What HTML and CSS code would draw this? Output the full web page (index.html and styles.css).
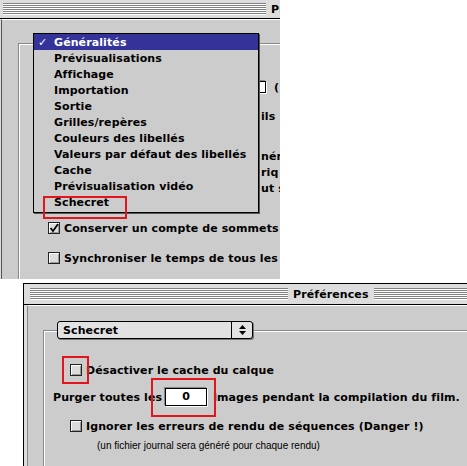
FILE: index.html
```html
<!DOCTYPE html>
<html lang="fr">
<head>
  <meta charset="UTF-8">
  <meta name="viewport" content="width=device-width, initial-scale=1.0">
  <title>Préférences</title>
  <link rel="stylesheet" href="styles.css">
</head>
<body>
  <!-- fenêtre du haut : menu déroulant ouvert -->
  <div class="win win-top">
    <div class="titlebar">
      <div class="stripes stripes-top"></div>
      <span class="title">Préférences</span>
      <div class="stripes"></div>
    </div>
    <div class="content">
      <div class="group">
        <div class="row row-field"><span class="field"></span><span>(1 à 99)</span></div>
        <div class="row row-frag gap-a">ils</div>
        <div class="row row-frag gap-b">nér</div>
        <div class="row row-frag">riq</div>
        <div class="row row-frag">ut s</div>
        <div class="row row-check gap-b">
          <span class="box"><svg width="10" height="10" viewBox="0 0 10 10"><path d="M1.5 5 L4 8 L9 1" fill="none" stroke="#000" stroke-width="1.7"/></svg></span>
          Conserver un compte de sommets
        </div>
        <div class="row row-check gap-c"><span class="box"></span>Synchroniser le temps de tous les éléments</div>
      </div>
    </div>

    <ul class="menu">
      <li class="sel"><span class="chk">✓</span>Généralités</li>
      <li><span class="chk"></span>Prévisualisations</li>
      <li><span class="chk"></span>Affichage</li>
      <li><span class="chk"></span>Importation</li>
      <li><span class="chk"></span>Sortie</li>
      <li><span class="chk"></span>Grilles/repères</li>
      <li><span class="chk"></span>Couleurs des libellés</li>
      <li><span class="chk"></span>Valeurs par défaut des libellés</li>
      <li><span class="chk"></span>Cache</li>
      <li><span class="chk"></span>Prévisualisation vidéo</li>
      <li><span class="chk"></span>Schecret</li>
    </ul>
    <div class="mark mark-menu"></div>
  </div>

  <!-- fenêtre du bas : panneau Schecret -->
  <div class="win win-bottom">
    <div class="titlebar">
      <div class="stripes stripes-bottom"></div>
      <span class="title">Préférences</span>
      <div class="stripes"></div>
    </div>
    <div class="content">
      <div class="group">
        <div class="popup">
          <span class="popup-label">Schecret</span>
          <span class="popup-arrows">
            <svg width="7" height="10" viewBox="0 0 7 10"><path d="M0 4 L3.5 0 L7 4Z M0 6 L3.5 10 L7 6Z" fill="#000"/></svg>
          </span>
        </div>
        <div class="row row-opt first"><span class="box"></span>Désactiver le cache du calque</div>
        <div class="row row-purge">Purger toutes les <span class="field field-num">0</span> images pendant la compilation du film.</div>
        <div class="row row-opt second"><span class="box"></span>Ignorer les erreurs de rendu de séquences (Danger !)</div>
        <div class="row note">(un fichier journal sera généré pour chaque rendu)</div>
      </div>
    </div>
    <div class="mark mark-box"></div>
    <div class="mark mark-field"></div>
  </div>
</body>
</html>
```

FILE: styles.css
```css
body {
  margin: 0;
  background: #fff;
  font-family: "DejaVu Sans", sans-serif;
  font-weight: bold;
  font-size: 11px;
  letter-spacing: 0.1px;
  color: #000;
}
.win {
  position: relative;
  overflow: hidden;
  background: #ddd;
}
.win-top {
  width: 280px;
  height: 279px;
}
.win-bottom {
  width: 443px;
  height: 182px;
  margin: 4px 0 0 23px;
  border-top: 1px solid #000;
  border-left: 1px solid #000;
}

/* barre de titre rayée */
.titlebar {
  display: flex;
  align-items: center;
  height: 18px;
  padding-left: 3px;
  border-bottom: 1px solid #000;
  background: #ddd;
}
.win-bottom .titlebar {
  height: 20px;
  padding-left: 6px;
}
.stripes {
  flex: 1;
  height: 12px;
  background: repeating-linear-gradient(#808080 0 1px, #fff 1px 2px);
}
.stripes-top {
  flex: none;
  width: 263px;
}
.stripes-bottom {
  flex: none;
  width: 258px;
}
.title {
  flex: none;
  padding: 0 5px;
  white-space: nowrap;
}

.content {
  height: 100%;
  margin-left: 1px;
  border-top: 1px solid #fff;
  border-left: 1px solid #555;
  background: #ccc;
}
.win-bottom .content {
  margin-left: 3px;
  border-left-color: #888;
}
.group {
  height: 400px;
  border-top: 1px solid #888;
  border-left: 1px solid #888;
  box-shadow: inset 1px 1px 0 #fff;
}
.win-top .group {
  margin: 23px 0 0 16px;
}
.win-bottom .group {
  margin: 24px 0 0 15px;
}

.row {
  display: flex;
  align-items: center;
  height: 16px;
  white-space: nowrap;
}
.row > span {
  flex: none;
}
.row-field {
  margin-top: 35px;
  padding-left: 187px;
}
.row-frag {
  padding-left: 242px;
}
.row-check {
  padding-left: 29px;
}
.gap-a { margin-top: 13px; }
.gap-b { margin-top: 24px; }
.gap-c { margin-top: 14px; }

.field {
  display: inline-block;
  box-sizing: border-box;
  width: 60px;
  height: 12px;
  margin-right: 8px;
  background: #fff;
  border: 1px solid #000;
  box-shadow: -1px -1px 0 #888, 1px 1px 0 #fff;
}
.field-num {
  width: 42px;
  height: 18px;
  margin: 0 6px 0 3px;
  line-height: 16px;
  text-align: center;
}

.box {
  display: flex;
  align-items: center;
  justify-content: center;
  box-sizing: border-box;
  width: 12px;
  height: 12px;
  margin-right: 4px;
  border: 1px solid #222;
  background: #ddd;
  box-shadow: inset 1px 1px 0 #fff, inset -1px -1px 0 #999;
}

/* menu déroulant */
.menu {
  position: absolute;
  left: 33px;
  top: 33px;
  box-sizing: border-box;
  width: 226px;
  margin: 0;
  padding: 0 0 2px;
  list-style: none;
  background: #ccc;
  border: 1px solid #000;
  box-shadow: 1px 1px 0 #555;
}
.menu li {
  display: flex;
  align-items: center;
  height: 16px;
  white-space: nowrap;
}
.menu .sel {
  background: #333399;
  color: #fff;
}
.chk {
  flex: none;
  box-sizing: border-box;
  width: 20px;
  padding-left: 4px;
}

/* bouton popup */
.popup {
  display: flex;
  box-sizing: border-box;
  width: 196px;
  height: 18px;
  margin: -10px 0 0 13px;
  background: #e2e2e2;
  border: 1px solid #000;
  border-radius: 3px;
  box-shadow: 1px 1px 0 #777;
}
.popup-label {
  flex: 1;
  display: flex;
  align-items: center;
  padding-left: 5px;
}
.popup-arrows {
  display: flex;
  align-items: center;
  justify-content: center;
  width: 20px;
  border-left: 1px solid #000;
}

.row-opt {
  padding-left: 26px;
}
.row-opt.first { margin-top: 23px; }
.row-opt.second { margin-top: 11px; }
.row-purge {
  height: 20px;
  margin-top: 9px;
  padding-left: 9px;
}
.note {
  height: 12px;
  margin-top: 5px;
  padding-left: 53px;
  font-family: "Liberation Sans", sans-serif;
  font-weight: normal;
  font-size: 10px;
  letter-spacing: 0;
}

/* encadrés rouges */
.mark {
  position: absolute;
  box-sizing: border-box;
  border: 2px solid #e3151c;
}
.mark-menu {
  left: 43px;
  top: 196px;
  width: 84px;
  height: 23px;
}
.mark-box {
  left: 38px;
  top: 72px;
  width: 27px;
  height: 28px;
}
.mark-field {
  left: 127px;
  top: 94px;
  width: 65px;
  height: 39px;
}
```
